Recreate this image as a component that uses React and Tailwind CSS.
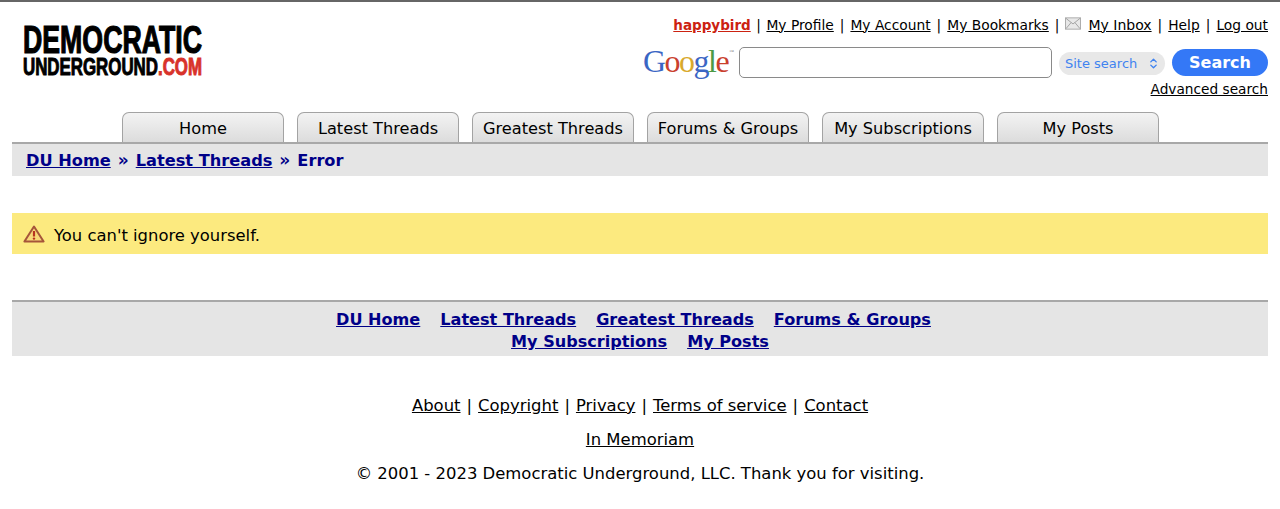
import { ChevronsUpDown } from "lucide-react";

const TABS = ["Home", "Latest Threads", "Greatest Threads", "Forums & Groups", "My Subscriptions", "My Posts"];

function Sep() {
  return <span className="mx-[6px]">|</span>;
}

function Logo() {
  return (
    <div className="w-[180px] font-['Liberation_Sans',sans-serif] font-bold text-black select-none">
      <div className="origin-top-left scale-x-[0.685] whitespace-nowrap text-[39px] leading-[32px] [-webkit-text-stroke:1.2px_black]">
        DEMOCRATIC
      </div>
      <div className="origin-top-left scale-x-[0.703] whitespace-nowrap text-[24px] leading-[21px] [-webkit-text-stroke:1px_black]">
        UNDERGROUND<span className="text-[#d8322a] [-webkit-text-stroke:1px_#d8322a]">.COM</span>
      </div>
    </div>
  );
}

function GoogleLogo() {
  return (
    <div className="w-[86px] -mr-[4px] -mt-[3px] text-[32px] leading-none tracking-[-1.5px] font-['Liberation_Serif',serif] flex items-start justify-end">
      <span className="text-[#3a66c4]">G</span>
      <span className="text-[#c9402e]">o</span>
      <span className="text-[#d9a92c]">o</span>
      <span className="text-[#3a66c4]">g</span>
      <span className="text-[#4c9a45]">l</span>
      <span className="text-[#c9402e]">e</span>
      <span className="ml-[1px] mt-[4px] text-[5px] leading-none tracking-normal text-[#888888]">™</span>
    </div>
  );
}

function MailIcon() {
  return (
    <svg width="16" height="13" viewBox="0 0 17 13" className="mr-[7px] mb-[4px] inline-block">
      <rect x="0.5" y="0.5" width="16" height="12" fill="#e8e8e8" stroke="#a8a8a8" />
      <path d="M1 1l7.5 6L16 1M1 12l5.5-6.5M16 12l-5.5-6.5" fill="none" stroke="#a0a0a0" />
    </svg>
  );
}

function WarningIcon() {
  return (
    <svg width="22" height="18" viewBox="0 0 22 18" className="shrink-0">
      <path d="M11 1.5L20.6 16.5H1.4Z" fill="#f8d878" stroke="#a5553a" strokeWidth="2" strokeLinejoin="round" />
      <path d="M11 6v5.5" stroke="#b8321f" strokeWidth="2.2" />
      <circle cx="11" cy="13.6" r="1.2" fill="#b8321f" />
    </svg>
  );
}

export default function App() {
  return (
    <div className="min-h-[509px] bg-white border-t-2 border-[#666666] text-[16.5px] text-black font-['DejaVu_Sans',sans-serif]">
      <div className="mx-3 flex justify-between h-[110px]">
        <div className="pl-[11px] pt-[22px]">
          <Logo />
        </div>
        <div className="flex flex-col items-end">
          <div className="mt-[13px] h-[20px] flex items-center text-[13.8px] whitespace-nowrap">
            <a href="#" className="underline font-bold text-[13.5px] text-[#cc2211]">happybird</a>
            <span className="mx-[5.5px]">|</span>
            <a href="#" className="underline">My Profile</a>
            <Sep />
            <a href="#" className="underline">My Account</a>
            <Sep />
            <a href="#" className="underline">My Bookmarks</a>
            <Sep />
            <MailIcon />
            <a href="#" className="underline text-[14px]">My Inbox</a>
            <Sep />
            <a href="#" className="underline">Help</a>
            <Sep />
            <a href="#" className="underline">Log out</a>
          </div>
          <div className="mt-[12px] h-[31px] flex items-center">
            <GoogleLogo />
            <input className="ml-[9px] w-[313px] h-[31px] bg-white rounded-[5px] border border-[#8a8a8a]" />
            <div className="ml-[7px] mt-[2px] w-[106px] h-[23px] rounded-full bg-[#e8e8e8] flex items-center justify-between pl-[6px] pr-[5px] text-[13px] text-[#3f83f0]">
              <span>Site search</span>
              <ChevronsUpDown size={13} strokeWidth={2.5} />
            </div>
            <button className="ml-[7px] w-[96px] h-[27px] rounded-full bg-[#3478f6] text-white font-bold text-[16px] leading-none">
              Search
            </button>
          </div>
          <a href="#" className="mt-[1px] text-[13.7px] underline">Advanced search</a>
        </div>
      </div>

      <div className="mx-3 pl-[110px] flex gap-[13px] h-[30px]">
        {TABS.map((tab) => (
          <div
            key={tab}
            className="w-[162px] h-[30px] flex items-center justify-center pt-[3px] rounded-t-[7px] border border-b-0 border-[#a3a3a3] bg-gradient-to-b from-[#f3f3f3] to-[#dcdcdc] whitespace-nowrap text-[16.2px]"
          >
            {tab}
          </div>
        ))}
      </div>

      <div className="mx-3 h-[34px] pt-[2px] border-t-2 border-[#a8a8a8] bg-[#e5e5e5] flex items-center pl-[14px] font-bold text-[16.2px] text-[#000088]">
        <a href="#" className="underline">DU Home</a>
        <span className="mx-[7px] text-[17px]">»</span>
        <a href="#" className="underline">Latest Threads</a>
        <span className="mx-[7px] text-[17px]">»</span>
        <span>Error</span>
      </div>

      <div className="mx-3 mt-[37px] h-[41px] bg-[#fcea7f] flex items-center pl-[11px] gap-[9px]">
        <WarningIcon />
        <span className="pt-[5px] text-[16.4px]">You can't ignore yourself.</span>
      </div>

      <div className="mx-3 mt-[46px] h-[56px] border-t-2 border-[#a8a8a8] bg-[#e5e5e5] flex flex-col items-center pt-[7px] font-bold text-[16.1px] leading-[22px] text-[#000088]">
        <div className="flex gap-[20px] pr-[13px]">
          <a href="#" className="underline">DU Home</a>
          <a href="#" className="underline">Latest Threads</a>
          <a href="#" className="underline">Greatest Threads</a>
          <a href="#" className="underline">Forums &amp; Groups</a>
        </div>
        <div className="flex gap-[20px]">
          <a href="#" className="underline">My Subscriptions</a>
          <a href="#" className="underline">My Posts</a>
        </div>
      </div>

      <div className="mt-[39px] flex flex-col items-center leading-[22px] text-[16.45px]">
        <div>
          <a href="#" className="underline">About</a>
          <Sep />
          <a href="#" className="underline">Copyright</a>
          <Sep />
          <a href="#" className="underline">Privacy</a>
          <Sep />
          <a href="#" className="underline">Terms of service</a>
          <Sep />
          <a href="#" className="underline">Contact</a>
        </div>
        <a href="#" className="mt-[12px] underline">In Memoriam</a>
        <div className="mt-[12px]">© 2001 - 2023 Democratic Underground, LLC. Thank you for visiting.</div>
      </div>
    </div>
  );
}
